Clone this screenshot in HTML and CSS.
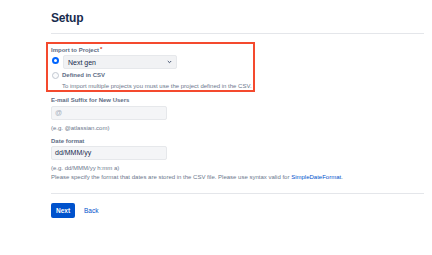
FILE: index.html
```html
<!DOCTYPE html>
<html lang="en">
<head>
  <meta charset="UTF-8">
  <title>Setup</title>
  <link rel="stylesheet" href="styles.css">
</head>
<body>
  <div class="page">
    <h1>Setup</h1>

    <div class="field-group highlight">
      <div class="label required">Import to Project</div>
      <div class="radio-row">
        <span class="radio checked"></span>
        <div class="select">
          <span>Next gen</span>
          <svg width="5" height="4" viewBox="0 0 5 4"><path d="M0.8 1 L2.5 2.7 L4.2 1" fill="none" stroke="#42526e" stroke-width="1"/></svg>
        </div>
      </div>
      <div class="radio-row second">
        <span class="radio"></span>
        <span class="radio-label">Defined in CSV</span>
      </div>
      <div class="help indent">To import multiple projects you must use the project defined in the CSV.</div>
    </div>

    <div class="field-group">
      <div class="label">E-mail Suffix for New Users</div>
      <div class="input placeholder">@</div>
      <div class="help">(e.g. @atlassian.com)</div>
    </div>

    <div class="field-group date">
      <div class="label">Date format</div>
      <div class="input">dd/MMM/yy</div>
      <div class="help">(e.g. dd/MMM/yy h:mm a)</div>
      <div class="help tight">Please specify the format that dates are stored in the CSV file. Please use syntax valid for <a href="#">SimpleDateFormat</a>.</div>
    </div>

    <div class="buttons">
      <button class="primary">Next</button>
      <a href="#" class="back">Back</a>
    </div>
  </div>
</body>
</html>
```

FILE: styles.css
```css
body {
  margin: 0;
  background: #fff;
  font-family: 'Liberation Sans', Arial, sans-serif;
  color: #172b4d;
}
.page {
  padding: 10px 8px 0 51px;
}
h1 {
  margin: 0;
  font-size: 12px;
  line-height: 16px;
  font-weight: 600;
  letter-spacing: -0.2px;
  padding-bottom: 7px;
  border-bottom: 1px solid #e4e6ea;
}
.field-group {
  margin-top: 4px;
}
.highlight {
  margin-top: 8px;
  margin-left: -5px;
  width: 209px;
  box-sizing: border-box;
  border: 2px solid #f44a2e;
  padding: 2px 0 0 3px;
}
.label {
  font-size: 6px;
  line-height: 8px;
  font-weight: 600;
  color: #5e6c84;
}
.label.required::after {
  content: '*';
  color: #de350b;
  margin-left: 1px;
  position: relative;
  top: -1px;
}
.radio-row {
  display: flex;
  align-items: center;
  margin-top: 1px;
}
.radio-row.second {
  margin-top: 2px;
  height: 8px;
}
.radio {
  width: 5px;
  height: 5px;
  border-radius: 50%;
  border: 1px solid #c1c7d0;
  background: #fafbfc;
  margin-left: 1px;
  flex-shrink: 0;
}
.radio.checked {
  background: #fff;
  border: 2px solid #0065ff;
  width: 3px;
  height: 3px;
  margin-top: -3px;
}
.select {
  margin-left: 4px;
  width: 114px;
  height: 14px;
  box-sizing: border-box;
  background: #f1f2f4;
  border: 1px solid #e6e8eb;
  border-radius: 2px;
  display: flex;
  align-items: center;
  justify-content: space-between;
  padding: 0 4px 0 4px;
  font-size: 7px;
  color: #172b4d;
}
.radio-label {
  margin-left: 3px;
  font-size: 6px;
  font-weight: 600;
  color: #5e6c84;
}
.help {
  font-size: 6px;
  line-height: 8px;
  color: #6b778c;
  margin-top: 4px;
}
.help.indent {
  margin-top: 3px;
  padding-left: 11px;
}
.help.tight {
  margin-top: 1px;
}
.help a {
  color: #0052cc;
  text-decoration: none;
}
.input {
  margin-top: 2px;
  width: 116px;
  height: 14px;
  box-sizing: border-box;
  background: #f4f5f7;
  border: 1px solid #e6e8eb;
  border-radius: 2px;
  padding: 0 3px;
  font-size: 7px;
  line-height: 12px;
  color: #172b4d;
}
.input.placeholder {
  color: #a5adba;
}
.date {
  margin-top: 5px;
}
.date .input {
  margin-top: 1px;
}
.buttons {
  margin-top: 12px;
  border-top: 1px solid #e4e6ea;
  padding-top: 9px;
  display: flex;
  align-items: center;
  gap: 9px;
}
.primary {
  width: 24px;
  height: 15px;
  padding: 0;
  border: none;
  border-radius: 2px;
  background: #0052cc;
  color: #fff;
  font-family: inherit;
  font-size: 6.5px;
  font-weight: 600;
}
.back {
  color: #0052cc;
  font-size: 6.5px;
  text-decoration: none;
}
```
